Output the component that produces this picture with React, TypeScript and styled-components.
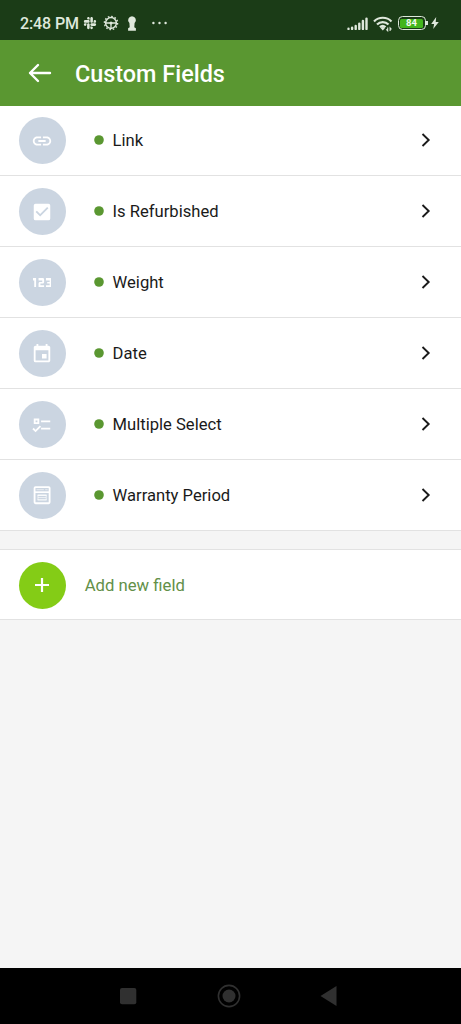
import React from 'react';
import styled, { createGlobalStyle } from 'styled-components';
import { FaSlack } from 'react-icons/fa';
import { Md123, MdCheckBox, MdEvent, MdLink } from 'react-icons/md';

const GlobalStyle = createGlobalStyle`
  * { box-sizing: border-box; }
  body { margin: 0; background: #f5f5f5; font-family: Roboto, sans-serif; }
`;

const Screen = styled.div`
  display: flex;
  flex-direction: column;
  width: 100%;
  height: 1024px;
  overflow: hidden;
  background: #f5f5f5;
`;

const StatusBar = styled.header`
  display: flex;
  align-items: center;
  flex: none;
  height: 40px;
  padding: 7px 22.5px 0 20px;
  background: #1b3c17;
  color: #dfe8dc;
`;

const Clock = styled.span`
  width: 62.5px;
  font-size: 16px;
  font-weight: 500;
  letter-spacing: -0.1px;
  line-height: 20px;
  white-space: nowrap;
`;

const Notifications = styled.div`
  display: flex;
  align-items: center;
  flex: 1;
  gap: 6.5px;
  padding-bottom: 1px;
  svg { display: block; }
`;

const KeyholeIcon = styled.svg`
  margin-left: 1.5px;
`;

const MoreIcon = styled.svg`
  margin-left: 8.5px;
`;

const SystemIcons = styled.div`
  display: flex;
  align-items: center;
  svg { display: block; }
`;

const WifiIcon = styled.svg`
  margin-left: 4.5px;
`;

const BoltIcon = styled.svg`
  margin: -1px 0 0 3px;
`;

const Battery = styled.div`
  display: flex;
  width: 28px;
  height: 14px;
  margin: -1px 0 0 5px;
  padding: 1.5px;
  border: 1.5px solid #dfe8dc;
  border-radius: 4.5px;
`;

const BatteryLevel = styled.div`
  display: flex;
  align-items: center;
  justify-content: center;
  flex: 1;
  border-radius: 1.5px;
  background: #43b51c;
  color: #f4faf0;
  font-size: 9.5px;
  font-weight: 700;
  line-height: 8px;
`;

const BatteryCap = styled.i`
  width: 1.5px;
  height: 4px;
  margin: -1px 0 0 0.5px;
  background: #dfe8dc;
`;

const AppBar = styled.div`
  display: flex;
  align-items: center;
  flex: none;
  height: 65.5px;
  padding: 2px 0 0 28px;
  background: #5a9731;
  color: #fff;
  svg { display: block; margin-top: -2px; }
`;

const Title = styled.h1`
  margin: 0 0 0 23px;
  font-size: 23.4px;
  font-weight: 500;
  line-height: 28px;
  white-space: nowrap;
`;

const Main = styled.main`
  flex: 1;
`;

const List = styled.ul`
  margin: 0;
  padding: 0;
  list-style: none;
`;

const Row = styled.li`
  display: flex;
  align-items: center;
  height: 70.9px;
  padding: 1px 30px 0 18.7px;
  border-bottom: 1px solid #e2e2e2;
  background: #fff;
`;

const Badge = styled.div<{ $color: string }>`
  display: flex;
  align-items: center;
  justify-content: center;
  flex: none;
  width: 47px;
  height: 47px;
  border-radius: 50%;
  background: ${({ $color }) => $color};
  color: #fff;
  svg { display: block; }
`;

const Dot = styled.svg`
  flex: none;
  margin: -1px 8.9px 0 28px;
  fill: #5a9731;
`;

const Label = styled.span`
  flex: 1;
  padding-top: 1px;
  color: #1a1a1a;
  font-size: 16.6px;
  line-height: 22px;
`;

const RowArrow = styled.svg`
  margin-top: -1px;
`;

const AddRow = styled(Row)`
  margin-top: 18px;
  height: 71.5px;
  border-top: 1px solid #e2e2e2;
`;

const AddLabel = styled.span`
  margin-left: 19px;
  padding-top: 1px;
  color: #639048;
  font-size: 16.7px;
  line-height: 22px;
`;

const NavBar = styled.nav`
  display: flex;
  align-items: center;
  justify-content: space-between;
  flex: none;
  height: 56px;
  padding: 0 124px 0 119px;
  background: #000;
  svg { display: block; }
`;

const NumericIcon = styled(Md123).attrs({ viewBox: '4.5 9 15 6', preserveAspectRatio: 'none' })`
  width: 18.5px;
  height: 9.5px;
`;

const ChecklistIcon = () => (
  <svg width="22" height="22" viewBox="0 0 24 24" fill="currentColor">
    <path d="M3 5h6v6H3V5m2 2v2h2V7H5m6 0h10v2H11V7m0 8h10v2H11v-2m-6 5-3.5-3.5 1.41-1.41L5 17.17l4.59-4.58L11 14l-6 6z" />
  </svg>
);

const FormIcon = () => (
  <svg width="22" height="22" viewBox="0 0 24 24" fill="none" stroke="currentColor" strokeWidth="2">
    <rect x="3.9" y="3.4" width="16.4" height="17.6" rx="1" />
    <path d="M4 8.9h16" strokeWidth="1.8" />
    <path d="M6 6.2h8M15.5 6.2h2.6" strokeWidth="1.4" strokeOpacity=".45" />
    <path d="M7.2 12.3h9.8M7.2 17.3h9.8" strokeWidth="1.5" strokeOpacity=".9" />
    <path d="M7.6 12v5.5M16.6 12v5.5M7.5 14.8h9" strokeWidth="1" strokeOpacity=".7" />
  </svg>
);

const Chevron = () => (
  <RowArrow width="10" height="14" viewBox="0 0 10 14" fill="none" stroke="#1a1a1a" strokeWidth="1.9">
    <path d="M1.5 1 7.7 7l-6.2 6" />
  </RowArrow>
);

const fields = [
  { label: 'Link', icon: <MdLink size={22} /> },
  { label: 'Is Refurbished', icon: <MdCheckBox size={22} /> },
  { label: 'Weight', icon: <NumericIcon /> },
  { label: 'Date', icon: <MdEvent size={22} /> },
  { label: 'Multiple Select', icon: <ChecklistIcon /> },
  { label: 'Warranty Period', icon: <FormIcon /> },
];

export default function App() {
  return (
    <>
      <GlobalStyle />
      <Screen>
        <StatusBar>
          <Clock>2:48 PM</Clock>
          <Notifications>
            <FaSlack size={14} />
            <svg width="16" height="16" viewBox="0 0 16 16" fill="none" stroke="currentColor">
              <circle cx="8" cy="8" r="5.4" strokeWidth="1.5" />
              <circle cx="8" cy="8" r="6.6" strokeWidth="1.4" strokeDasharray="1.6 1.856" />
              <path d="M3 8h10M8 8v5" strokeWidth="1.3" />
              <circle cx="8" cy="8" r="1.5" fill="currentColor" stroke="none" />
            </svg>
            <KeyholeIcon width="10" height="15" viewBox="0 0 10 15" fill="currentColor">
              <path d="M5 .3a3.9 3.9 0 0 0-2.6 6.8l.3 4.2-1.6 1v2.4h7.8v-2.4l-1.6-1 .3-4.2A3.9 3.9 0 0 0 5 .3z" />
            </KeyholeIcon>
            <MoreIcon width="16" height="4" viewBox="0 0 16 4" fill="currentColor">
              <circle cx="1.4" cy="2" r="1.2" />
              <circle cx="7.5" cy="2" r="1.2" />
              <circle cx="13.6" cy="2" r="1.2" />
            </MoreIcon>
          </Notifications>
          <SystemIcons>
            <svg width="21" height="14" viewBox="0 0 21 14" stroke="currentColor" strokeWidth="2.4" strokeLinecap="round">
              <path d="M1.5 11.8v.1M5.1 10.8v1.1M8.7 9v2.9M12.3 6.6v5.3M15.9 4v7.9M19.5 1.6v10.3" />
            </svg>
            <WifiIcon width="20" height="16" viewBox="0 0 20 16" fill="none" stroke="currentColor" strokeWidth="2.2">
              <path d="M1 5.4a12.3 12.3 0 0 1 17.5 0M4 8.5a8.2 8.2 0 0 1 11.5 0M6.9 11.2a4.3 4.3 0 0 1 5.6 0" />
              <path d="M7.5 12 9.8 14.6 12 12a3.2 3.2 0 0 0-4.5 0z" fill="currentColor" stroke="none" />
              <path d="M14.7 11.6v3.2l-1.4-1.5M17.1 15v-3.2l1.4 1.5" strokeWidth="1.1" />
            </WifiIcon>
            <Battery><BatteryLevel>84</BatteryLevel></Battery>
            <BatteryCap />
            <BoltIcon width="8" height="12" viewBox="0 0 8 12" fill="currentColor">
              <path d="M5.2 0 .2 6.9h2.9L2.2 12 7.8 5H4.7z" />
            </BoltIcon>
          </SystemIcons>
        </StatusBar>
        <AppBar>
          <svg width="24" height="20" viewBox="0 0 24 20" fill="none" stroke="currentColor" strokeWidth="2.4" strokeLinecap="round" strokeLinejoin="round">
            <path d="M22 10H2M10 2 2 10l8 8" />
          </svg>
          <Title>Custom Fields</Title>
        </AppBar>
        <Main>
          <List>
            {fields.map(({ label, icon }) => (
              <Row key={label}>
                <Badge $color="#cbd5e1">{icon}</Badge>
                <Dot width="10" height="10" viewBox="0 0 10 10">
                  <circle cx="5" cy="5" r="4.8" />
                </Dot>
                <Label>{label}</Label>
                <Chevron />
              </Row>
            ))}
          </List>
          <AddRow as="div">
            <Badge $color="#84cc16">
              <svg width="16" height="16" viewBox="0 0 16 16" stroke="currentColor" strokeWidth="2.2">
                <path d="M8 1v14M1 8h14" />
              </svg>
            </Badge>
            <AddLabel>Add new field</AddLabel>
          </AddRow>
        </Main>
        <NavBar>
          <svg width="18" height="18" viewBox="0 0 18 18" fill="#303030">
            <rect x="1" y="1" width="16.3" height="16.3" rx="2" />
          </svg>
          <svg width="24" height="24" viewBox="0 0 24 24">
            <circle cx="12" cy="12" r="10.6" fill="none" stroke="#303030" strokeWidth="1.6" />
            <circle cx="12" cy="12" r="6.5" fill="#303030" />
          </svg>
          <svg width="17" height="20" viewBox="0 0 17 20" fill="#303030">
            <path d="M16.5 0v20L.5 10z" />
          </svg>
        </NavBar>
      </Screen>
    </>
  );
}
